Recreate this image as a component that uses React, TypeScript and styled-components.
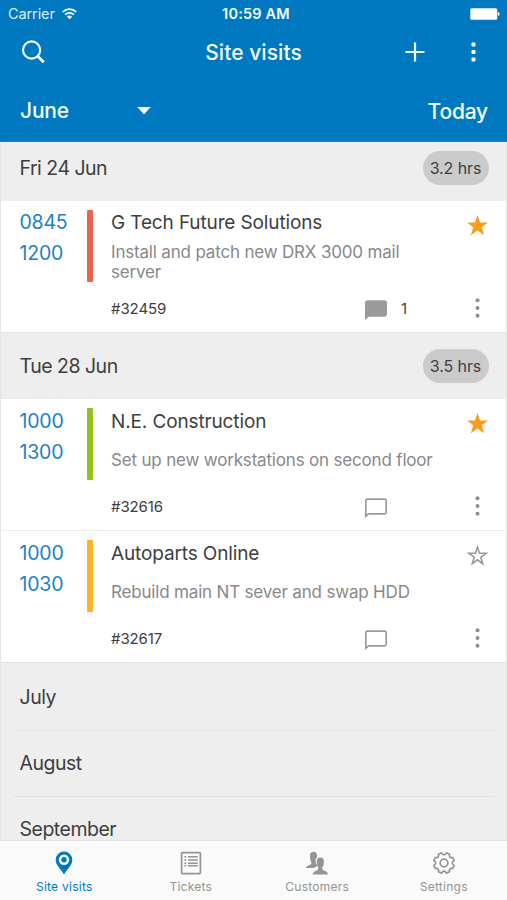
import React from "react";
import styled, { createGlobalStyle } from "styled-components";

const GlobalStyle = createGlobalStyle`
  *, *::before, *::after { box-sizing: border-box; }
  html, body { margin: 0; padding: 0; }
  body { font-family: Inter, "Liberation Sans", sans-serif; color: #3e3e40; background: #eee; }
  svg { display: block; flex: none; }
  button { appearance: none; border: 0; padding: 0; margin: 0; background: none; font: inherit; color: inherit; letter-spacing: inherit; }
  h1, h2, h3, p { margin: 0; font-weight: 400; }
`;

const Screen = styled.div`
  width: 507px;
  height: 900px;
  display: flex;
  flex-direction: column;
  overflow: hidden;
  background: #eeeeee;
`;

const Header = styled.header`
  flex: none;
  height: 142px;
  background: #0079c1;
  border-bottom: 1px solid #3d7599;
  color: #f4fbff;
`;

const StatusBar = styled.div`
  height: 27px;
  display: grid;
  grid-template-columns: 1fr auto 1fr;
  align-items: center;
  padding: 0 7px 0 8px;
  font-size: 14.5px;
  line-height: 27px;
`;

const Carrier = styled.div`
  display: flex;
  align-items: center;
  gap: 7px;
  color: #d9eefb;
  letter-spacing: -0.1px;
`;

const Clock = styled.div`
  padding-left: 4px;
  font-weight: 600;
  font-size: 14.5px;
  letter-spacing: 0.2px;
`;

const BatterySlot = styled.div`
  display: flex;
  justify-content: flex-end;
`;

const TitleBar = styled.div`
  height: 50px;
  display: grid;
  grid-template-columns: 1fr auto 1fr;
  align-items: center;
  padding: 0 21px;
`;

const Title = styled.h1`
  font-size: 21px;
  font-weight: 500;
  letter-spacing: 0.05px;
`;

const TitleActions = styled.div`
  display: flex;
  justify-content: flex-end;
  align-items: center;
  gap: 46px;
  padding-right: 10px;
`;

const MonthBar = styled.div`
  height: 64px;
  display: flex;
  align-items: center;
  justify-content: space-between;
  padding: 3px 19px 0 20px;
  font-size: 21px;
  font-weight: 500;
  letter-spacing: -0.2px;
`;

const MonthPicker = styled.button`
  width: 131px;
  display: flex;
  align-items: center;
  justify-content: space-between;
`;

const TodayButton = styled.button`
  padding-top: 1px;
  font-size: 21px;
`;

const Agenda = styled.main`
  flex: 1;
  min-height: 0;
  overflow: hidden;
  border-left: 1px solid #e6e6e6;
  border-right: 1px solid #e6e6e6;
`;

const DayHeader = styled.div<{ $first?: boolean }>`
  height: ${(p) => (p.$first ? 59 : 66.4)}px;
  padding: 0 17.5px 0 18.5px;
  padding-bottom: ${(p) => (p.$first ? 8 : 0)}px;
  display: flex;
  align-items: center;
  justify-content: space-between;
`;

const DayLabel = styled.h2`
  font-size: 19.5px;
  letter-spacing: -0.5px;
`;

const Hours = styled.span`
  width: 66px;
  height: 34px;
  border-radius: 17px;
  background: #cbcbcb;
  font-size: 16px;
  letter-spacing: -0.1px;
  line-height: 34px;
  text-align: center;
`;

const Card = styled.article`
  height: 132px;
  padding: 9px 18px 0 18.5px;
  display: flex;
  background: #fff;
  border-bottom: 1px solid #e4e4e4;

  &:not(:last-child) {
    border-bottom-color: #eeeeee;
  }
`;

const Times = styled.div`
  width: 67px;
  margin-top: -2.6px;
  font-size: 19.5px;
  line-height: 31px;
  letter-spacing: -0.2px;
  color: #1c82c4;
`;

const StatusStripe = styled.div<{ $color: string }>`
  width: 6px;
  height: 72px;
  border-radius: 1px;
  background: ${(p) => p.$color};
`;

const Details = styled.div`
  flex: 1;
  margin-left: 18.5px;
`;

const CardTop = styled.div`
  height: 31px;
  display: flex;
  justify-content: space-between;
`;

const Customer = styled.h3`
  margin-top: 0.3px;
  font-size: 19px;
  line-height: 25px;
  letter-spacing: -0.13px;
`;

const StarButton = styled.button`
  width: 21px;
  height: 21px;
  margin-top: 4.5px;
`;

const Summary = styled.p`
  width: 330px;
  height: 42px;
  display: flex;
  align-items: center;
  font-size: 17px;
  line-height: 20.5px;
  letter-spacing: -0.18px;
  color: #88888a;
`;

const Meta = styled.div`
  height: 20px;
  margin-top: 15px;
  display: grid;
  grid-template-columns: 253px 37px 1fr auto;
  grid-template-rows: 20px;
  align-items: center;
  font-size: 15px;
  letter-spacing: -0.1px;
  padding-right: 8px;
`;

const CommentMark = styled.span`
  align-self: start;
`;

const MoreButton = styled.button`
  color: #8d8d8d;
`;

const MonthRow = styled.div<{ $first?: boolean }>`
  height: 66.3px;
  padding-left: 18.5px;
  display: flex;
  align-items: center;
  font-size: 19.5px;
  letter-spacing: -0.5px;
  background: ${(p) =>
    p.$first ? "none" : "linear-gradient(#e4e4e4, #e4e4e4) 12px 0 / 482px 1px no-repeat"};
`;

const TabBar = styled.nav`
  flex: none;
  height: 60px;
  padding: 0 0 0 1px;
  display: grid;
  grid-template-columns: repeat(4, 1fr);
  background: #fafafa;
  border-top: 1px solid #e2e2e2;
`;

const Tab = styled.button<{ $active?: boolean }>`
  display: flex;
  flex-direction: column;
  align-items: center;
  padding-top: 10px;
  gap: 3px;
  font-size: 12px;
  line-height: 18px;
  letter-spacing: 0.25px;
  color: ${(p) => (p.$active ? "#0079c1" : "#949494")};
`;

const WifiIcon = () => (
  <svg width="15" height="12" viewBox="0 0 15 12" fill="none" stroke="#f4fbff" strokeWidth="1.7">
    <path d="M.7 4a9.7 9.7 0 0 1 13.6 0" />
    <path d="M3.1 6.7a6.2 6.2 0 0 1 8.8 0" />
    <path d="M7.5 11.3 4.9 8.7a3.7 3.7 0 0 1 5.2 0z" fill="#f4fbff" stroke="none" />
  </svg>
);

const BatteryIcon = () => (
  <svg width="30" height="12" viewBox="0 0 30 12" fill="#fff">
    <rect x="0.3" y="0.2" width="27" height="11.6" rx="1.6" />
    <path d="M28 4q1.6.4 1.6 2T28 8z" />
  </svg>
);

const SearchIcon = () => (
  <svg width="24" height="24" viewBox="0 0 24 24" fill="none" stroke="#f4fbff">
    <circle cx="10.6" cy="10" r="8.6" strokeWidth="2.1" />
    <path d="m16.5 16 6.3 6.3" strokeWidth="2.7" />
  </svg>
);

const PlusIcon = () => (
  <svg width="20" height="20" viewBox="0 0 20 20" stroke="#f4fbff" strokeWidth="2.2">
    <path d="M10 .5v19M.5 10h19" />
  </svg>
);

const HeaderMoreIcon = () => (
  <svg width="5" height="20" viewBox="0 0 5 20" fill="#f4fbff">
    <rect x=".5" y=".4" width="4" height="4" rx="1" />
    <rect x=".5" y="8" width="4" height="4" rx="1" />
    <rect x=".5" y="15.6" width="4" height="4" rx="1" />
  </svg>
);

const MoreIcon = () => (
  <svg width="5" height="20" viewBox="0 0 5 20" fill="currentColor">
    <circle cx="2.5" cy="2.2" r="2" />
    <circle cx="2.5" cy="10" r="2" />
    <circle cx="2.5" cy="17.8" r="2" />
  </svg>
);

const CaretIcon = () => (
  <svg width="14" height="8" viewBox="0 0 14 8" fill="#f4fbff">
    <path d="M.3.1h13.4L7 7.5z" />
  </svg>
);

const StarIcon = ({ filled }: { filled: boolean }) =>
  filled ? (
    <svg width="21" height="21" viewBox="0 0 21 21" fill="#f99d1c">
      <path d="m10.5 0 2.6 7.4 7.9.1-6.2 4.8 2.3 8-6.6-4.7-6.6 4.7 2.3-8L0 7.5l7.9-.1z" />
    </svg>
  ) : (
    <svg width="21" height="21" viewBox="0 0 21 21" fill="none" stroke="#999" strokeWidth="1.6">
      <path d="m10.5 2.2 2 6 6.6.1-5.3 3.9 1.9 6.4-5.2-3.8-5.2 3.8 1.9-6.4-5.3-3.9 6.6-.1z" />
    </svg>
  );

const CommentIcon = ({ filled }: { filled: boolean }) => (
  <svg width="24" height="22" viewBox="0 0 24 22" fill={filled ? "#9b9b9b" : "none"} stroke="#9b9b9b" strokeWidth="1.7">
    <path d="M1.8 20.2V4.7Q1.8 3.1 3.4 3.1h17.2q1.6 0 1.6 1.6v11.6q0 1.6-1.6 1.6H4.6z" />
  </svg>
);

const PinIcon = () => (
  <svg width="22" height="24" viewBox="0 0 22 24" fill="currentColor">
    <path
      fillRule="evenodd"
      d="M11 .6A8.3 8.3 0 0 0 2.7 9C2.7 14.5 8 18.2 11 23.4 14 18.2 19.3 14.5 19.3 9A8.3 8.3 0 0 0 11 .6Zm0 3a5.2 5.2 0 1 1 0 10.4 5.2 5.2 0 0 1 0-10.4Z"
    />
    <circle cx="11" cy="8.8" r="2.7" />
  </svg>
);

const TicketsIcon = () => (
  <svg width="22" height="24" viewBox="0 0 22 24" fill="none" stroke="currentColor">
    <rect x="1.6" y="1.6" width="18.8" height="21" rx="1" strokeWidth="1.7" />
    <path d="M4.4 5.7h1.8M4.4 9h1.8M4.4 12.3h1.8M4.4 14.8h1.8M8 5.7h9.8M8 9h9.8M8 12.3h9.8M8 14.8h9.8" strokeWidth="1.5" />
  </svg>
);

const CustomersIcon = () => (
  <svg width="22" height="24" viewBox="0 0 22 24" fill="currentColor">
    <path d="M4 4.7C4 2.2 5.3.8 7.5.8s3.6 1.4 3.6 3.8c0 .8-.1 1.5-.4 2.1-1 .9-1.4 2.2-1.1 4.2.2 1.2.8 2.4 1.4 3.2v1.2c-1 .6-2.2 1-3.2 1.7H0c.1-2 2.3-2.6 4.6-3.6.6-.3.9-.9.8-2C4.4 10 4 7.4 4 4.7Z" />
    <path d="M10.7 10.5C10.7 8 12 6.6 14.3 6.6s3.6 1.4 3.6 3.9c0 2.4-.5 4.6-1.5 5.8-.1 1.9.1 2.4 1 2.9 2.3 1 4.5 1.7 4.6 4.2H6.6c.1-2.5 2.3-3.2 4.6-4.2.9-.5 1.1-1 1-2.9-1-1.2-1.5-3.4-1.5-5.8Z" />
  </svg>
);

const GearIcon = () => (
  <svg width="24" height="24" viewBox="0 0 24 24" fill="none" stroke="currentColor" strokeWidth="1.7" strokeLinejoin="round">
    <circle cx="12" cy="12" r="3.9" />
    <path d="M9.6 1.9Q12 5.7 14.4 1.9L17.5 3.2Q16.7 7.3 20.8 6.5L22.1 9.6Q18.3 12 22.1 14.4L20.8 17.5Q16.7 16.7 17.5 20.8L14.4 22.1Q12 18.3 9.6 22.1L6.5 20.8Q7.3 16.7 3.2 17.5L1.9 14.4Q5.7 12 1.9 9.6L3.2 6.5Q7.3 7.3 6.5 3.2Z" />
  </svg>
);

type Visit = {
  start: string;
  end: string;
  color: string;
  customer: string;
  summary: string;
  ticket: string;
  starred: boolean;
  comments: number;
};

const days: { label: string; hours: string; visits: Visit[] }[] = [
  {
    label: "Fri 24 Jun",
    hours: "3.2 hrs",
    visits: [
      {
        start: "0845",
        end: "1200",
        color: "#ed6248",
        customer: "G Tech Future Solutions",
        summary: "Install and patch new DRX 3000 mail server",
        ticket: "#32459",
        starred: true,
        comments: 1,
      },
    ],
  },
  {
    label: "Tue 28 Jun",
    hours: "3.5 hrs",
    visits: [
      {
        start: "1000",
        end: "1300",
        color: "#95c11f",
        customer: "N.E. Construction",
        summary: "Set up new workstations on second floor",
        ticket: "#32616",
        starred: true,
        comments: 0,
      },
      {
        start: "1000",
        end: "1030",
        color: "#feb223",
        customer: "Autoparts Online",
        summary: "Rebuild main NT sever and swap HDD",
        ticket: "#32617",
        starred: false,
        comments: 0,
      },
    ],
  },
];

const months = ["July", "August", "September"];

const tabs = [
  { label: "Site visits", icon: <PinIcon /> },
  { label: "Tickets", icon: <TicketsIcon /> },
  { label: "Customers", icon: <CustomersIcon /> },
  { label: "Settings", icon: <GearIcon /> },
];

const VisitCard = ({ visit }: { visit: Visit }) => (
  <Card>
    <Times>
      <div>{visit.start}</div>
      <div>{visit.end}</div>
    </Times>
    <StatusStripe $color={visit.color} />
    <Details>
      <CardTop>
        <Customer>{visit.customer}</Customer>
        <StarButton aria-label="Star">
          <StarIcon filled={visit.starred} />
        </StarButton>
      </CardTop>
      <Summary>{visit.summary}</Summary>
      <Meta>
        <span>{visit.ticket}</span>
        <CommentMark>
          <CommentIcon filled={visit.comments > 0} />
        </CommentMark>
        <span>{visit.comments > 0 ? visit.comments : ""}</span>
        <MoreButton aria-label="More">
          <MoreIcon />
        </MoreButton>
      </Meta>
    </Details>
  </Card>
);

export default function App() {
  return (
    <Screen>
      <GlobalStyle />
      <Header>
        <StatusBar>
          <Carrier>
            <span>Carrier</span>
            <WifiIcon />
          </Carrier>
          <Clock>10:59 AM</Clock>
          <BatterySlot>
            <BatteryIcon />
          </BatterySlot>
        </StatusBar>
        <TitleBar>
          <SearchIcon />
          <Title>Site visits</Title>
          <TitleActions>
            <PlusIcon />
            <HeaderMoreIcon />
          </TitleActions>
        </TitleBar>
        <MonthBar>
          <MonthPicker>
            <span>June</span>
            <CaretIcon />
          </MonthPicker>
          <TodayButton>Today</TodayButton>
        </MonthBar>
      </Header>
      <Agenda>
        {days.map((day, d) => (
          <section key={day.label}>
            <DayHeader $first={d === 0}>
              <DayLabel>{day.label}</DayLabel>
              <Hours>{day.hours}</Hours>
            </DayHeader>
            {day.visits.map((visit) => (
              <VisitCard key={visit.ticket} visit={visit} />
            ))}
          </section>
        ))}
        {months.map((month, i) => (
          <MonthRow key={month} $first={i === 0}>
            {month}
          </MonthRow>
        ))}
      </Agenda>
      <TabBar>
        {tabs.map((tab, i) => (
          <Tab key={tab.label} $active={i === 0}>
            {tab.icon}
            <span>{tab.label}</span>
          </Tab>
        ))}
      </TabBar>
    </Screen>
  );
}
